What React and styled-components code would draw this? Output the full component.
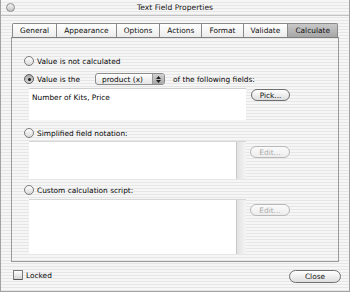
import React from "react";
import styled, { createGlobalStyle } from "styled-components";

const GlobalStyle = createGlobalStyle`
  html, body { margin: 0; padding: 0; background: #ffffff; }
  body { font-family: "DejaVu Sans", Verdana, sans-serif; }
`;

const stripes = `repeating-linear-gradient(to bottom, #f6f6f6 0px, #f6f6f6 2px, #e6e6e6 2px, #e6e6e6 3px)`;

const Window = styled.div`
  width: 350px;
  height: 292px;
  box-sizing: border-box;
  border: 1px solid #a2a2a2;
  border-top: none;
  background: ${stripes};
  display: flex;
  flex-direction: column;
  font-size: 7.4px;
  color: #050505;
`;

const TitleBar = styled.div`
  height: 15px;
  border-bottom: 1px solid #c2c2c2;
  display: grid;
  grid-template-columns: 20px 1fr 20px;
  align-items: center;
`;

const CloseDot = styled.div`
  width: 7px;
  height: 7px;
  margin-left: 5px;
  border-radius: 50%;
  border: 1px solid #8c8c8c;
  background: linear-gradient(#f4f4f4, #c4c4c4);
`;

const Title = styled.div`
  text-align: center;
  font-size: 7.6px;
  color: #202020;
`;

const TabRow = styled.div`
  display: flex;
  margin: 7px 11px 0 11px;
  height: 14px;
`;

const Tab = styled.div`
  flex: 1 1 auto;
  display: flex;
  align-items: center;
  justify-content: center;
  padding: 0 4px;
  border: 1px solid #8a8a8a;
  border-bottom: none;
  border-left-width: ${(p) => (p.first ? "1px" : "0")};
  border-radius: ${(p) => (p.first ? "2px 0 0 0" : p.last ? "0 2px 0 0" : "0")};
  background: ${(p) =>
    p.active
      ? "linear-gradient(#c9c9c9, #a6a6a6)"
      : "linear-gradient(#ffffff, #ececec)"};
  color: #101010;
  white-space: nowrap;
`;

const Panel = styled.div`
  margin: 0 10px 0 10px;
  height: 225px;
  box-sizing: border-box;
  border: 1px solid #9a9a9a;
  border-top-color: #7e7e7e;
  padding: 18px 0 7px 12px;
  display: flex;
  flex-direction: column;
`;

const RadioRow = styled.div`
  display: flex;
  align-items: center;
  gap: 3px;
  height: ${(p) => p.h || 10}px;
  margin-top: ${(p) => p.mt || 0}px;
`;

const Radio = styled.div`
  width: 8px;
  height: 8px;
  border-radius: 50%;
  border: 1px solid ${(p) => (p.checked ? "#5e5e5e" : "#7c7c7c")};
  background: ${(p) =>
    p.checked
      ? "linear-gradient(#a9a9a9, #d6d6d6)"
      : "linear-gradient(#ffffff, #d9d9d9)"};
  display: flex;
  align-items: center;
  justify-content: center;
  flex: none;

  &::after {
    content: "";
    display: ${(p) => (p.checked ? "block" : "none")};
    width: 3px;
    height: 3px;
    border-radius: 50%;
    background: #1a1a1a;
  }
`;

const Popup = styled.div`
  width: 70px;
  height: 12px;
  box-sizing: border-box;
  margin: 0 5px 0 12px;
  border: 1px solid #8c8c8c;
  border-radius: 3px;
  background: linear-gradient(#ffffff, #e6e6e6);
  display: flex;
  align-items: center;
`;

const PopupLabel = styled.span`
  flex: 1;
  padding-left: 6px;
`;

const Stepper = styled.div`
  width: 11px;
  height: 100%;
  border-left: 1px solid #9a9a9a;
  border-radius: 0 2px 2px 0;
  background: linear-gradient(#d2d2d2, #a8a8a8);
  display: flex;
  flex-direction: column;
  align-items: center;
  justify-content: center;
  gap: 1px;
`;

const FieldRow = styled.div`
  display: flex;
  align-items: flex-start;
  margin-left: 5px;
  margin-top: ${(p) => p.mt || 0}px;
  height: ${(p) => p.h}px;
`;

const TextBox = styled.div`
  width: 217px;
  height: 100%;
  box-sizing: border-box;
  background: #ffffff;
  border-top: 1px solid #cfcfcf;
  display: flex;
  padding: 4px 3px;
`;

const ScrollBox = styled.div`
  width: 217px;
  height: 100%;
  box-sizing: border-box;
  background: #ffffff;
  border-top: 1px solid #d6d6d6;
  display: flex;
  justify-content: flex-end;
`;

const ScrollStrip = styled.div`
  width: 10px;
  height: 100%;
  box-sizing: border-box;
  border-left: 1px solid #c8c8c8;
  background: linear-gradient(to right, #e2e2e2, #f4f4f4);
`;

const PillButton = styled.div`
  width: ${(p) => p.w || 39}px;
  height: ${(p) => p.h || 12}px;
  box-sizing: border-box;
  margin: ${(p) => p.m || "0"};
  border: 1px solid ${(p) => (p.disabled ? "#b9b9b9" : "#6f6f6f")};
  border-radius: 7px;
  background: ${(p) =>
    p.disabled
      ? "linear-gradient(#fbfbfb, #ededed)"
      : "linear-gradient(#ffffff, #dedede)"};
  color: ${(p) => (p.disabled ? "#ababab" : "#101010")};
  display: flex;
  align-items: center;
  justify-content: center;
  flex: none;
`;

const Footer = styled.div`
  flex: 1;
  display: flex;
  align-items: center;
  justify-content: space-between;
  padding: 0 8px 0 12px;
`;

const CheckLabel = styled.div`
  display: flex;
  align-items: center;
  gap: 3px;
  margin-top: -3px;
`;

const CheckBox = styled.div`
  width: 10px;
  height: 10px;
  box-sizing: border-box;
  border: 1px solid #7a7a7a;
  border-bottom-color: #555555;
  border-radius: 1px;
  background: linear-gradient(#ffffff, #d4d4d4);
`;

const Arrow = ({ up }) => (
  <svg width="5" height="3" viewBox="0 0 5 3">
    <polygon points={up ? "2.5,0 5,3 0,3" : "0,0 5,0 2.5,3"} fill="#202020" />
  </svg>
);

const tabs = ["General", "Appearance", "Options", "Actions", "Format", "Validate", "Calculate"];

export default function App() {
  return (
    <>
      <GlobalStyle />
      <Window>
        <TitleBar>
          <CloseDot />
          <Title>Text Field Properties</Title>
          <span />
        </TitleBar>
        <TabRow>
          {tabs.map((t, i) => (
            <Tab key={t} first={i === 0} last={i === tabs.length - 1} active={t === "Calculate"}>
              {t}
            </Tab>
          ))}
        </TabRow>
        <Panel>
          <RadioRow>
            <Radio />
            <span>Value is not calculated</span>
          </RadioRow>
          <RadioRow h={12} mt={7}>
            <Radio checked />
            <span>Value is the</span>
            <Popup>
              <PopupLabel>product (x)</PopupLabel>
              <Stepper>
                <Arrow up />
                <Arrow />
              </Stepper>
            </Popup>
            <span>of the following fields:</span>
          </RadioRow>
          <FieldRow h={32} mt={3}>
            <TextBox>Number of Kits, Price</TextBox>
            <PillButton m="1px 0 0 5px">Pick...</PillButton>
          </FieldRow>
          <RadioRow mt={8}>
            <Radio />
            <span>Simplified field notation:</span>
          </RadioRow>
          <FieldRow h={38} mt={3}>
            <ScrollBox>
              <ScrollStrip />
            </ScrollBox>
            <PillButton disabled w={40} m="5px 0 0 4px">Edit...</PillButton>
          </FieldRow>
          <RadioRow mt={6}>
            <Radio />
            <span>Custom calculation script:</span>
          </RadioRow>
          <FieldRow h={55} mt={4}>
            <ScrollBox>
              <ScrollStrip />
            </ScrollBox>
            <PillButton disabled w={40} m="5px 0 0 4px">Edit...</PillButton>
          </FieldRow>
        </Panel>
        <Footer>
          <CheckLabel>
            <CheckBox />
            <span>Locked</span>
          </CheckLabel>
          <PillButton w={52} h={13}>Close</PillButton>
        </Footer>
      </Window>
    </>
  );
}
